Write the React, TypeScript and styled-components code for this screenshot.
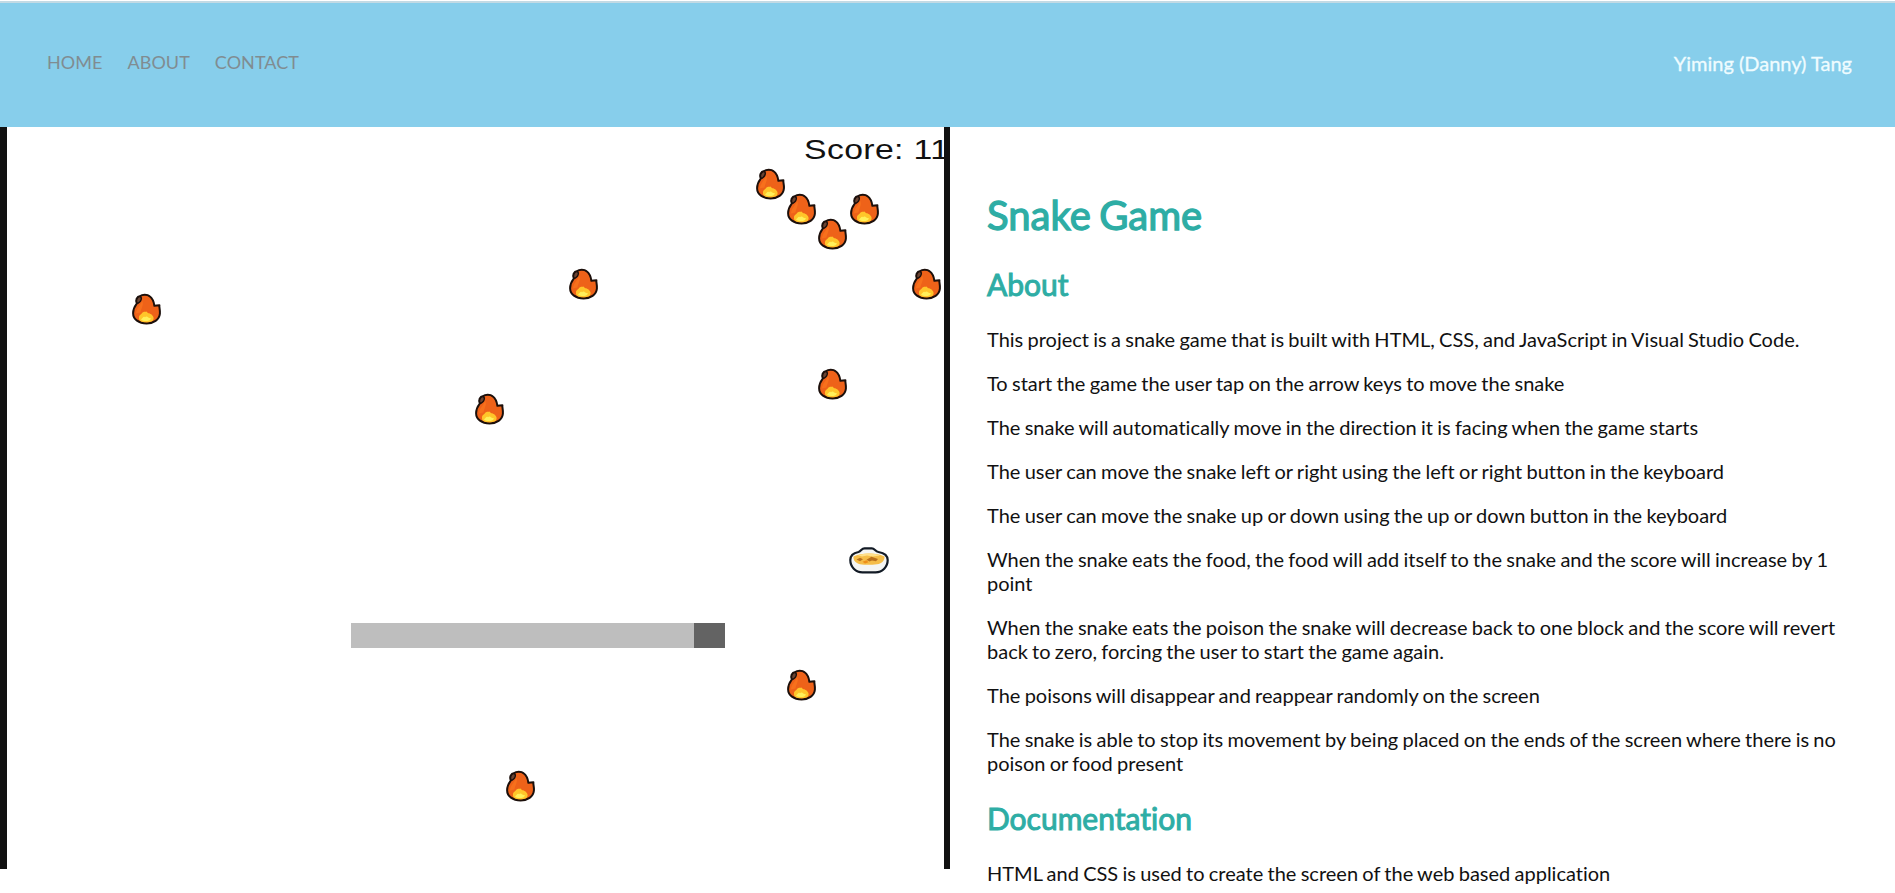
import React from 'react';
import styled, { createGlobalStyle } from 'styled-components';

const GlobalStyle = createGlobalStyle`
  *, *::before, *::after { box-sizing: border-box; }
  html, body { margin: 0; height: 893px; overflow: hidden; background: #fff; }
  body {
    font-family: Lato, 'Liberation Sans', sans-serif;
    font-variant-ligatures: none;
    color: #111;
  }
`;

const Page = styled.div`
  display: flex;
  flex-direction: column;
  height: 893px;
  padding-top: 1px;
  overflow: hidden;
`;

const Header = styled.header`
  display: flex;
  flex: none;
  justify-content: space-between;
  height: 126px;
  padding: 47px 43px 0 47px;
  border-top: 2px solid #c3dae4;
  background: #87ceeb;
`;

const Nav = styled.nav`
  display: flex;
  gap: 25px;
`;

const NavLink = styled.a`
  font-size: 18px;
  line-height: 25px;
  letter-spacing: 0.05px;
  color: #808c91;
`;

const Brand = styled.span`
  font-size: 20px;
  line-height: 26px;
  font-weight: 400;
  color: #effcff;
  -webkit-text-stroke: 0.3px #effcff;
`;

const Columns = styled.main`
  display: grid;
  grid-template-columns: 950px 1fr;
  align-items: start;
`;

const Board = styled.section`
  position: relative;
  height: 742px;
  border: solid #111;
  border-width: 0 6px 0 7px;
  overflow: hidden;
`;

const Score = styled.div`
  position: absolute;
  top: 8px;
  left: 797px;
  font: 27px/31px 'Liberation Sans', Arial, sans-serif;
  letter-spacing: 0.3px;
  white-space: nowrap;
  transform: scaleX(1.25);
  transform-origin: 0 0;
`;

const Sprite = styled.svg<{ $x: number; $y: number }>`
  position: absolute;
  left: ${(p) => p.$x}px;
  top: ${(p) => p.$y}px;
  overflow: visible;
`;

const Snake = styled.div`
  position: absolute;
  left: 344px;
  top: 496px;
  display: flex;
  width: 374px;
  height: 25px;
  background: #bebebe;
  justify-content: flex-end;
`;

const SnakeHead = styled.div`
  width: 31px;
  background: #636363;
`;

const Article = styled.article`
  padding: 64px 37px 0;
`;

const Title = styled.h1`
  margin: 0 0 27px;
  font-size: 40px;
  line-height: 48px;
  font-weight: 400;
  word-spacing: -1.8px;
  color: #2eada5;
  -webkit-text-stroke: 1.3px #2eada5;
`;

const Subtitle = styled.h2`
  margin: 0 0 25px;
  font-size: 30px;
  line-height: 36px;
  font-weight: 400;
  color: #2eada5;
  -webkit-text-stroke: 1px #2eada5;
`;

const Paragraph = styled.p`
  margin: 0 0 20px;
  font-size: 20px;
  line-height: 24px;
  word-spacing: -0.85px;
`;

const Section = styled.section`
  padding-bottom: 5px;
`;

const flames: [number, number][] = [
  [749, 41], [780, 66], [811, 91], [843, 66], [905, 141], [562, 141],
  [125, 166], [811, 241], [468, 266], [780, 542], [499, 643],
];

const about = [
  'This project is a snake game that is built with HTML, CSS, and JavaScript in Visual Studio Code.',
  'To start the game the user tap on the arrow keys to move the snake',
  'The snake will automatically move in the direction it is facing when the game starts',
  'The user can move the snake left or right using the left or right button in the keyboard',
  'The user can move the snake up or down using the up or down button in the keyboard',
  'When the snake eats the food, the food will add itself to the snake and the score will increase by 1 point',
  'When the snake eats the poison the snake will decrease back to one block and the score will revert back to zero, forcing the user to start the game again.',
  'The poisons will disappear and reappear randomly on the screen',
  'The snake is able to stop its movement by being placed on the ends of the screen where there is no poison or food present',
];

function Flame({ x, y }: { x: number; y: number }) {
  return (
    <Sprite $x={x} $y={y} width="29" height="32" viewBox="0 0 29 32">
      <path
        d="M4.8 10.5C3.4 7 4.6 3.6 8.4 3C10 1.2 15.5 1.1 17.6 3.2C20.4 5.2 21.8 8.2 22.4 12.8L27.4 12.2C27 14.5 28.3 17 27.9 20.6C27.3 26.8 21.5 30.4 14.6 30.4C7 30.4 1.1 26.4 1.1 20.2C1.1 16 2.6 13.4 4.8 10.5Z"
        fill="#ee6219" stroke="#1b0f0b" strokeWidth="2" strokeLinejoin="round"
      />
      <path d="M3.8 20.5C4.5 14.5 9 12.5 10 7.5C12.5 11.5 9 15.5 8.5 19.5Z" fill="#ff7d20" opacity=".5" />
      <path d="M7 25C6.7 22 9 22 10.5 19.5C12 18 13 19 14.5 18.5C16 21 18 19.8 20 22C22 23.8 22.2 26 20.7 27.7C17 29.8 11 29.8 8 27.7C7.2 26.8 6.9 26 7 25Z" fill="#ffc52a" />
      <path d="M9 26.5C11 25.4 11 23 13 24.2C15 21.8 16.5 25.8 19 25.2C18.5 28.5 11.5 29 9 26.5Z" fill="#fff05a" />
      <path d="M5.2 10.2C3.6 7.8 4.8 4.2 8.2 3.4L9.4 5C9.4 7.2 8 9.2 5.8 10.4Z" fill="#6b4433" stroke="#1b0f0b" strokeWidth="1.4" />
    </Sprite>
  );
}

function Bowl() {
  return (
    <Sprite $x={842} $y={420} width="40" height="27" viewBox="0 0 40 27">
      <path
        d="M9.5 5C12.3 4.3 12.5 1.3 15.5 1.3H22.8C25.8 1.3 26 4.3 29.5 5C35.5 6 38.7 8.8 38.7 13C38.7 19.8 33.5 25.4 26.5 25.4H13.5C6.5 25.4 1.3 19.8 1.3 13C1.3 8.8 4 6 9.5 5Z"
        fill="#f4f5f3" stroke="#121a25" strokeWidth="2.2"
      />
      <path d="M4.5 9.5C12 5.5 28 5.5 35.5 9.5C36 13 33 16.5 28 17.3C22 18 16 18 11 17.3C6.5 16 4 13 4.5 9.5Z" fill="#f5bd48" />
      <path d="M9 8.2C16 5.8 25 5.8 31 8.4L24 9.6L18 8.6L13 9.6Z" fill="#ffe08a" />
      <path d="M7.5 12.5L11 10.7L14 12.2L11 14.2ZM17.5 12.7L22.5 9.7L29 12L27 14.3L23 13.5L20.5 14.5Z" fill="#b9701c" />
      <path d="M13.5 14.8L17.5 13.2L19.5 15.2L16 16.4Z" fill="#ed8e18" />
    </Sprite>
  );
}

export default function App() {
  return (
    <>
      <GlobalStyle />
      <Page>
        <Header>
          <Nav>
            <NavLink>HOME</NavLink>
            <NavLink>ABOUT</NavLink>
            <NavLink>CONTACT</NavLink>
          </Nav>
          <Brand>Yiming (Danny) Tang</Brand>
        </Header>
        <Columns>
          <Board>
            <Score>Score: 11</Score>
            {flames.map(([x, y]) => <Flame key={`${x}-${y}`} x={x} y={y} />)}
            <Bowl />
            <Snake><SnakeHead /></Snake>
          </Board>
          <Article>
            <Title>Snake Game</Title>
            <Section>
              <Subtitle>About</Subtitle>
              {about.map((text) => <Paragraph key={text}>{text}</Paragraph>)}
            </Section>
            <Section>
              <Subtitle>Documentation</Subtitle>
              <Paragraph>HTML and CSS is used to create the screen of the web based application</Paragraph>
            </Section>
          </Article>
        </Columns>
      </Page>
    </>
  );
}
